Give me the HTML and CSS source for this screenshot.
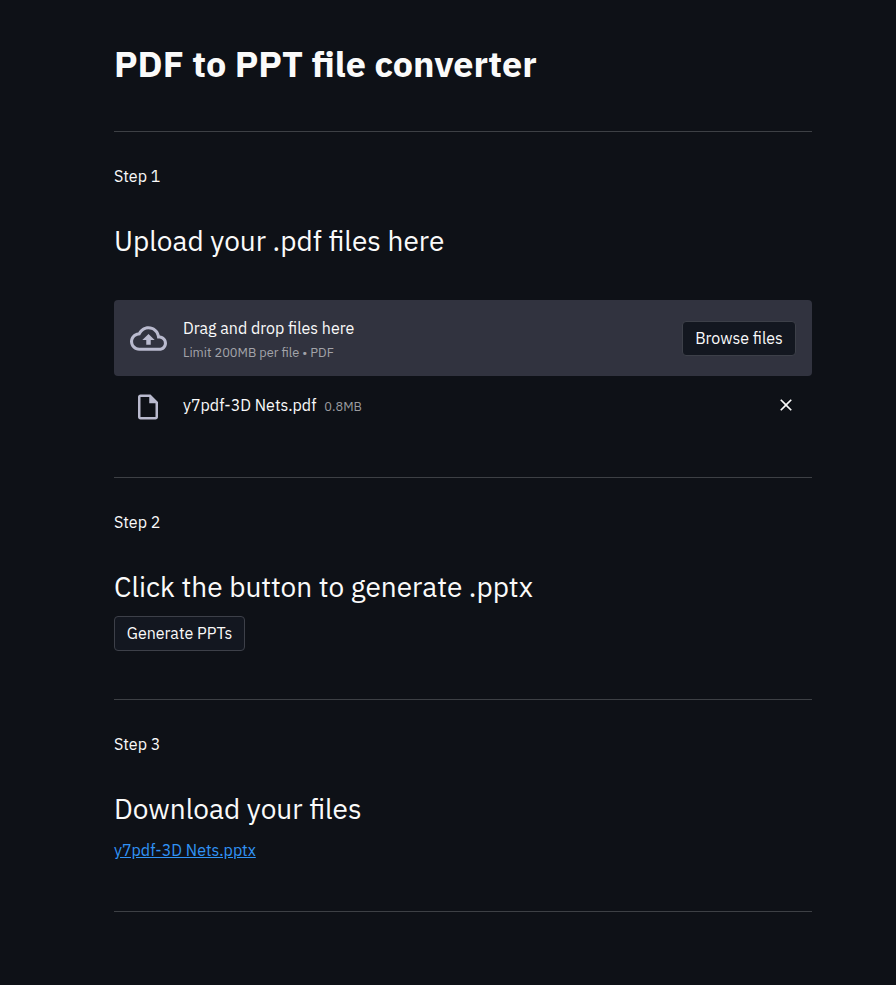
FILE: index.html
```html
<!DOCTYPE html>
<html lang="en">
<head>
<meta charset="utf-8">
<title>PDF to PPT file converter</title>
<link rel="stylesheet" href="styles.css">
</head>
<body>
<main class="page">
  <h1 class="title">PDF to PPT file converter</h1>
  <section class="step step-upload">
    <p class="label">Step 1</p>
    <h2 class="heading">Upload your .pdf files here</h2>
    <div class="dropzone">
      <svg class="cloud" viewBox="0 0 24 24"><path d="M19.35 10.04C18.67 6.59 15.64 4 12 4 9.11 4 6.6 5.64 5.35 8.04 2.34 8.36 0 10.91 0 14c0 3.31 2.69 6 6 6h13c2.76 0 5-2.24 5-5 0-2.64-2.05-4.78-4.65-4.96zM19 18H6c-2.21 0-4-1.79-4-4 0-2.05 1.53-3.76 3.56-3.97l1.07-.11.5-.95C8.08 7.14 9.94 6 12 6c2.62 0 4.88 1.86 5.39 4.43l.3 1.5 1.53.11c1.56.1 2.78 1.41 2.78 2.96 0 1.65-1.35 3-3 3zM8 13h2.55v3h2.9v-3H16l-4-4z"/></svg>
      <div class="hint">
        <span class="hint-main">Drag and drop files here</span>
        <small class="hint-sub">Limit 200MB per file • PDF</small>
      </div>
      <button class="button browse">Browse files</button>
    </div>
    <div class="file">
      <svg class="doc" viewBox="0 0 24 24"><path d="M14 2H6c-1.1 0-1.99.9-1.99 2L4 20c0 1.1.89 2 1.99 2H18c1.1 0 2-.9 2-2V8l-6-6zM6 20V4h7v5h5v11H6z"/></svg>
      <span class="file-name">y7pdf-3D Nets.pdf</span>
      <small class="file-size">0.8MB</small>
      <svg class="close" viewBox="0 0 24 24"><path d="M19 6.41 17.59 5 12 10.59 6.41 5 5 6.41 10.59 12 5 17.59 6.41 19 12 13.41 17.59 19 19 17.59 13.41 12z"/></svg>
    </div>
  </section>
  <section class="step step-generate">
    <p class="label">Step 2</p>
    <h2 class="heading">Click the button to generate .pptx</h2>
    <button class="button generate">Generate PPTs</button>
  </section>
  <section class="step step-download">
    <p class="label">Step 3</p>
    <h2 class="heading">Download your files</h2>
    <a class="link" href="#">y7pdf-3D Nets.pptx</a>
  </section>
</main>
</body>
</html>
```
FILE: styles.css
```css
* { box-sizing: border-box; }
body {
  margin: 0;
  background: #0e1117;
  color: #fafafa;
  font: 400 16px/24px "IBM Plex Sans", Roboto, sans-serif;
}
h1, h2, p { margin: 0; }
svg { display: block; flex: none; fill: #b9bace; }
.page { width: 698px; margin: 0 0 0 114px; padding-top: 42px; height: 985px; white-space: nowrap; }
.title { height: 89px; font-size: 36px; line-height: 44px; font-weight: 700; }
.step { border-top: 1px solid #3d4045; padding-top: 32px; }
.step-upload { height: 346px; }
.step-generate { height: 222px; }
.step-download { height: 213px; border-bottom: 1px solid #3d4045; }
.label { height: 24px; }
.heading { margin-top: 36px; height: 34px; font-size: 28px; line-height: 34px; font-weight: 400; }
.dropzone {
  display: flex;
  align-items: center;
  height: 76px;
  margin-top: 42px;
  padding: 0 16px;
  background: #31333f;
  border-radius: 4px;
}
.cloud { width: 37px; height: 37px; margin-right: 16px; }
.hint { display: flex; flex-direction: column; align-items: flex-start; margin-top: 4px; }
.hint-sub { font-size: 12.8px; line-height: 25px; color: #a3a4aa; }
.button {
  height: 35px;
  padding: 0;
  border: 1px solid #3d4049;
  border-radius: 4px;
  background: #131720;
  color: #fafafa;
  font: inherit;
}
.browse { width: 114px; margin-left: auto; }
.generate { display: block; width: 131px; margin-top: 12px; padding-bottom: 1px; }
.file { display: flex; align-items: center; height: 58px; padding: 0 16px 0 19.4px; }
.doc { width: 30px; height: 30px; margin: 3px 19.6px 0 0; }
.file-size { margin: 4px 0 0 8px; font-size: 12.8px; color: #9a9b9f; }
.close { width: 20px; height: 20px; margin-left: auto; fill: #fafafa; }
.link { display: block; width: max-content; margin-top: 12px; color: #3193f5; }
```
